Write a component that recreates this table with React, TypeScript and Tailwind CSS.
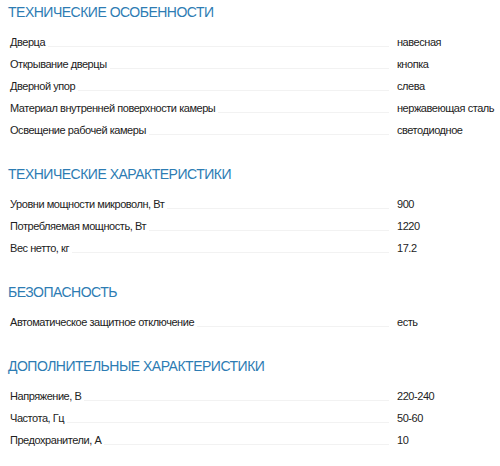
import React from "react";

const sections: { title: string; rows: [string, string][] }[] = [
  {
    title: "ТЕХНИЧЕСКИЕ ОСОБЕННОСТИ",
    rows: [
      ["Дверца", "навесная"],
      ["Открывание дверцы", "кнопка"],
      ["Дверной упор", "слева"],
      ["Материал внутренней поверхности камеры", "нержавеющая сталь"],
      ["Освещение рабочей камеры", "светодиодное"],
    ],
  },
  {
    title: "ТЕХНИЧЕСКИЕ ХАРАКТЕРИСТИКИ",
    rows: [
      ["Уровни мощности микроволн, Вт", "900"],
      ["Потребляемая мощность, Вт", "1220"],
      ["Вес нетто, кг", "17.2"],
    ],
  },
  {
    title: "БЕЗОПАСНОСТЬ",
    rows: [["Автоматическое защитное отключение", "есть"]],
  },
  {
    title: "ДОПОЛНИТЕЛЬНЫЕ ХАРАКТЕРИСТИКИ",
    rows: [
      ["Напряжение, В", "220-240"],
      ["Частота, Гц", "50-60"],
      ["Предохранители, А", "10"],
    ],
  },
];

export default function App() {
  return (
    <div
      className="w-[500px] h-[466px] bg-white px-2 overflow-hidden"
      style={{ fontFamily: '"Liberation Sans", Arial, sans-serif' }}
    >
      {sections.map((s, i) => (
        <div key={s.title} className={i === 0 ? "" : "mt-[21px]"}>
          <div className="h-[24px] leading-[24px] text-[14px] tracking-[-0.5px] text-[#2d7cb3] mb-[7px]">
            {s.title}
          </div>
          {s.rows.map(([l, v]) => (
            <div key={l} className="flex items-center h-[22px] text-[11px] tracking-[-0.45px] text-[#222]">
              <span className="pl-[2px] whitespace-nowrap">{l}</span>
              <span className="flex-1 self-end mb-[6px] border-b border-[#f2f2f2] ml-[3px] mr-[8px]"></span>
              <span className="w-[95px] whitespace-nowrap">{v}</span>
            </div>
          ))}
        </div>
      ))}
    </div>
  );
}
